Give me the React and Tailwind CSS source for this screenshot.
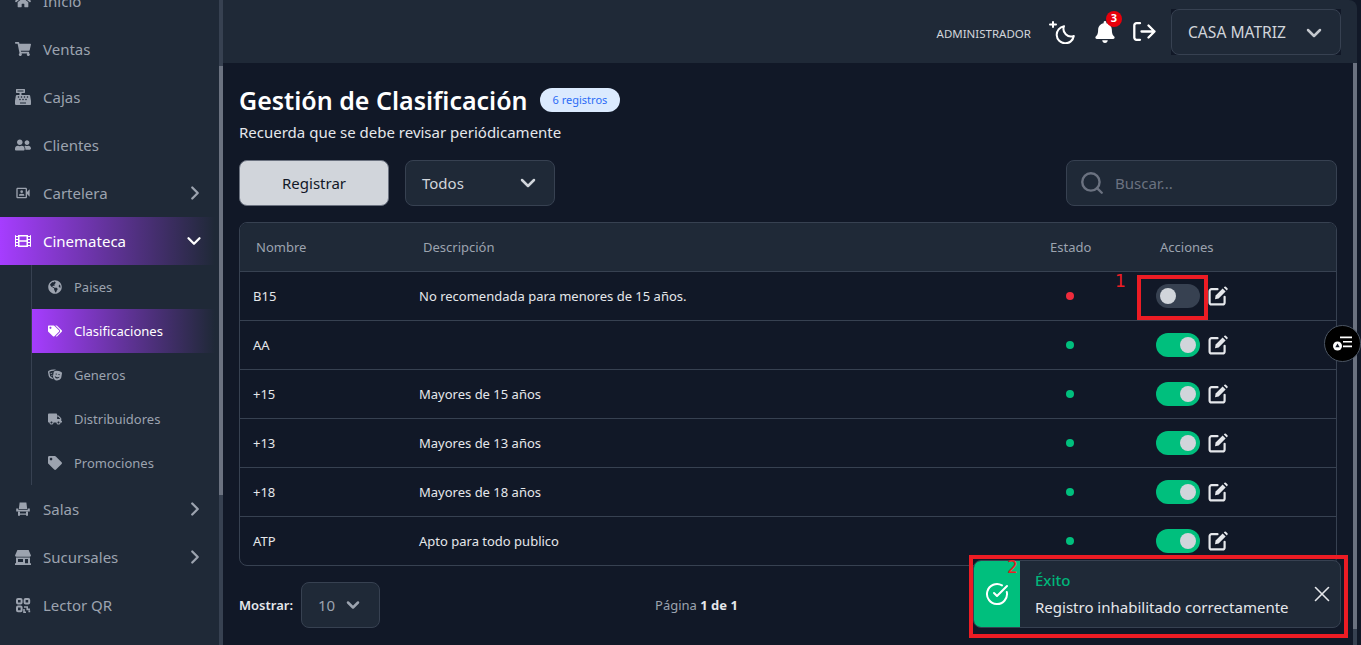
import React from "react";
import {
  FaHome,
  FaShoppingCart,
  FaCashRegister,
  FaUserFriends,
  FaFilm,
  FaGlobeAmericas,
  FaTags,
  FaTheaterMasks,
  FaTruck,
  FaTag,
  FaBell,
} from "react-icons/fa";
import { MdOutlineVideoCameraFront } from "react-icons/md";
import { ChevronDown, ChevronRight, Search, CircleCheckBig, X } from "lucide-react";

function ChairIcon({ className }) {
  return (
    <svg className={className} viewBox="0 0 16 16" fill="currentColor">
      <path d="M4.6 1.5h6.8l.8 6.5H3.8z" />
      <path d="M1.2 7.6h2v1.2h9.6V7.6h2v2.8H1.2z" />
      <path d="M3 10.4h2v2h6v-2h2v4.4h-2v-1H5v1H3z" />
    </svg>
  );
}

function StoreIcon({ className }) {
  return (
    <svg className={className} viewBox="0 0 16 16" fill="currentColor" fillRule="evenodd">
      <path d="M2.4 1h11.2L16 6.6a1.6 1.6 0 0 1-1.6 1.2H1.6A1.6 1.6 0 0 1 0 6.6z" />
      <path d="M1 8.6h14v5.6h1V16H0v-1.8h1zM3 10v3h5v-3zM10 10v4.2h3V10z" />
    </svg>
  );
}

function QrIcon({ className }) {
  return (
    <svg className={className} viewBox="0 0 16 16" fill="none" stroke="currentColor" strokeWidth="2">
      <rect x="2" y="2" width="4.6" height="4.6" rx="1" />
      <rect x="9.6" y="2" width="4.6" height="4.6" rx="1" />
      <rect x="2" y="9.6" width="4.6" height="4.6" rx="1" />
      <path d="M9 10h3.2v2.4H15M9 12v3.2h2M13.4 14.4h1.8" strokeWidth="1.6" />
    </svg>
  );
}

function EditIcon() {
  return (
    <svg className="ml-2 text-[#e5e7eb]" width="20" height="20" viewBox="0 0 20 20" fill="none">
      <path d="M9.5 3.2H3.6a2 2 0 0 0-2 2v11.2a2 2 0 0 0 2 2h11a2 2 0 0 0 2-2v-5.6" stroke="currentColor" strokeWidth="2.2" strokeLinecap="round" />
      <path d="M7.6 9.6 14.6 2.6l3 3-7 7-3.6.7z" fill="currentColor" />
      <path d="M15.8 1.4l.7-.6a1 1 0 0 1 1.4 0l1.5 1.5a1 1 0 0 1 0 1.4l-.6.7z" fill="currentColor" />
    </svg>
  );
}

const menuTop = [
  { name: "Inicio", icon: FaHome },
  { name: "Ventas", icon: FaShoppingCart },
  { name: "Cajas", icon: FaCashRegister },
  { name: "Clientes", icon: FaUserFriends },
  { name: "Cartelera", icon: MdOutlineVideoCameraFront, arrow: true },
];
const subMenu = [
  { name: "Paises", icon: FaGlobeAmericas },
  { name: "Clasificaciones", icon: FaTags, active: true },
  { name: "Generos", icon: FaTheaterMasks },
  { name: "Distribuidores", icon: FaTruck },
  { name: "Promociones", icon: FaTag },
];
const menuBottom = [
  { name: "Salas", icon: ChairIcon, arrow: true },
  { name: "Sucursales", icon: StoreIcon, arrow: true },
  { name: "Lector QR", icon: QrIcon },
];
const rows = [
  { name: "B15", desc: "No recomendada para menores de 15 años.", on: false },
  { name: "AA", desc: "", on: true },
  { name: "+15", desc: "Mayores de 15 años", on: true },
  { name: "+13", desc: "Mayores de 13 años", on: true },
  { name: "+18", desc: "Mayores de 18 años", on: true },
  { name: "ATP", desc: "Apto para todo publico", on: true },
];

function MenuItem({ item }) {
  const Icon = item.icon;
  return (
    <div className="h-12 flex items-center pl-[15px] pr-[13px] text-[#9ca3af]">
      <Icon className="w-4 h-4 shrink-0" />
      <span className="ml-3 text-[15px] flex-1">{item.name}</span>
      {item.arrow && <ChevronRight className="w-[22px] h-[22px]" strokeWidth={2.5} />}
    </div>
  );
}

function Sidebar() {
  return (
    <aside className="w-[223px] shrink-0 h-full flex bg-[#1f2937] overflow-hidden">
      <nav className="w-[219px] h-full overflow-hidden">
        <div className="-mt-[23px]">
          {menuTop.map((item) => (
            <MenuItem key={item.name} item={item} />
          ))}
          <div className="h-12 w-[215px] flex items-center pl-[15px] pr-[10px] text-white bg-gradient-to-r from-[#a63dff] to-transparent">
            <FaFilm className="w-4 h-4 shrink-0" />
            <span className="ml-3 text-[15px] flex-1">Cinemateca</span>
            <ChevronDown className="w-[22px] h-[22px]" strokeWidth={2.5} />
          </div>
          <div className="ml-[31px] w-[184px] border-l border-[#374151]">
            {subMenu.map((item) => {
              const Icon = item.icon;
              return (
                <div
                  key={item.name}
                  className={
                    item.active
                      ? "h-11 flex items-center pl-4 text-white bg-gradient-to-r from-[#a63dff] to-transparent"
                      : "h-11 flex items-center pl-4 text-[#9ca3af]"
                  }
                >
                  <Icon className="w-[14px] h-[14px] shrink-0" />
                  <span className="ml-3 mt-[2px] text-[13px]">{item.name}</span>
                </div>
              );
            })}
          </div>
          {menuBottom.map((item) => (
            <MenuItem key={item.name} item={item} />
          ))}
        </div>
      </nav>
      <div className="w-1 h-full bg-[#374151] pt-[66px]">
        <div className="h-[429px] bg-[#6b7280]"></div>
      </div>
    </aside>
  );
}

function MoonIcon() {
  return (
    <svg width="26" height="23" viewBox="0 0 26 23" fill="none" stroke="currentColor" strokeWidth="2" strokeLinecap="round" strokeLinejoin="round">
      <path d="M15 5.2a8.6 8.6 0 1 0 9.8 9.8A7.6 7.6 0 0 1 15 5.2Z" />
      <path d="M4 1v5M1 3.5h6" />
    </svg>
  );
}

function LogoutIcon() {
  return (
    <svg width="23" height="19" viewBox="0 0 23 19" fill="none" stroke="currentColor" strokeWidth="2.3" strokeLinecap="round" strokeLinejoin="round">
      <path d="M7 1.2H3.5a2.2 2.2 0 0 0-2.2 2.2v12.2a2.2 2.2 0 0 0 2.2 2.2H7" />
      <path d="M8.5 9.5h13M15.5 3.5l6 6-6 6" />
    </svg>
  );
}

function Header() {
  return (
    <header className="h-[63px] shrink-0 bg-[#1f2937] rounded-tr-lg flex items-center justify-end pr-[16px]">
      <span className="text-[11.5px] text-[#d1d5db] mt-[5px]">ADMINISTRADOR</span>
      <span className="ml-[18px] text-white mt-[1px]">
        <MoonIcon />
      </span>
      <div className="relative ml-[20px] text-white">
        <FaBell className="w-5 h-[22px]" />
        <span className="absolute -top-[10px] left-[11px] w-4 h-4 rounded-full bg-[#e7000b] text-white text-[11px] font-bold flex items-center justify-center">
          3
        </span>
      </div>
      <span className="ml-[18px] text-white">
        <LogoutIcon />
      </span>
      <div className="ml-[15px] bg-[#111827]">
        <div className="w-[170px] h-[46px] rounded-lg border border-[#374151] bg-[#1f2937] flex items-center justify-between pl-4 pr-[14px] text-[#d1d5db]">
          <span className="text-[15.6px] mt-[3px]">CASA MATRIZ</span>
          <ChevronDown className="w-6 h-6 mt-[2px] text-[#c4c8ce]" strokeWidth={2.5} />
        </div>
      </div>
    </header>
  );
}

function Toggle({ on }) {
  return (
    <div
      className={
        on
          ? "w-11 h-6 rounded-full bg-[#00bf7d] flex items-center justify-end px-1"
          : "w-11 h-6 rounded-full bg-[#374151] flex items-center justify-start px-1"
      }
    >
      <div className="w-4 h-4 rounded-full bg-[#d1d5db]"></div>
    </div>
  );
}

function Table() {
  return (
    <div className="mt-4 h-[344px] rounded-lg border border-[#374151] overflow-hidden">
      <div className="h-[49px] bg-[#1f2937] flex items-center text-[13px] text-[#9ca3af] border-b border-[#374151]">
        <span className="w-[183px] pl-4 mt-[2px]">Nombre</span>
        <span className="w-[627px] mt-[2px]">Descripción</span>
        <span className="w-[110px] mt-[2px]">Estado</span>
        <span className="mt-[2px]">Acciones</span>
      </div>
      {rows.map((row, i) => (
        <div
          key={row.name}
          className={
            i < rows.length - 1
              ? "h-[49px] flex items-center text-[13px] text-[#e5e7eb] border-b border-[#374151]"
              : "h-[48px] flex items-center text-[13px] text-[#e5e7eb]"
          }
        >
          <span className="w-[179px] pl-[13px] mt-[2px]">{row.name}</span>
          <span className="w-[647px] mt-[2px]">{row.desc}</span>
          <span className="w-[90px]">
            <span className={row.on ? "block w-2 h-2 rounded-full bg-[#00bf7d]" : "block w-2 h-2 rounded-full bg-[#ef2b3c]"}></span>
          </span>
          <Toggle on={row.on} />
          <EditIcon />
        </div>
      ))}
    </div>
  );
}

function Main() {
  return (
    <div className="w-[1134px] shrink-0 flex flex-col h-full">
      <Header />
      <div className="flex-1 flex min-h-0">
        <main className="w-[1130px] px-4 pt-[19px]">
          <div className="flex items-center">
            <h1 className="text-[25px] font-semibold text-white leading-[36px]">Gestión de Clasificación</h1>
            <span className="ml-3 h-6 px-[13px] rounded-full bg-[#dbeafe] text-[#2b6cf6] text-[11px] flex items-center">6 registros</span>
          </div>
          <p className="text-[15px] text-[#e5e7eb] mt-[3px] leading-[22px]">Recuerda que se debe revisar periódicamente</p>
          <div className="mt-[17px] flex items-center">
            <button className="w-[150px] h-[46px] rounded-lg bg-[#d1d5db] border border-[#6b7280] text-[#111827] text-[15px]">Registrar</button>
            <div className="ml-4 w-[150px] h-[46px] rounded-lg border border-[#374151] bg-[#1f2937] flex items-center justify-between pl-4 pr-[14px] text-[#d1d5db]">
              <span className="text-[15px]">Todos</span>
              <ChevronDown className="w-6 h-6" strokeWidth={2.5} />
            </div>
            <div className="ml-auto w-[271px] h-[46px] rounded-lg border border-[#374151] bg-[#1f2937] flex items-center pl-3 text-[#6b7280]">
              <Search className="w-[26px] h-[26px]" strokeWidth={2.2} />
              <span className="ml-[10px] text-[15px]">Buscar...</span>
            </div>
          </div>
          <Table />
          <div className="mt-4 flex items-center">
            <span className="mt-[2px] text-[13px] font-semibold text-[#e5e7eb]">Mostrar:</span>
            <div className="ml-2 w-[79px] h-[46px] rounded-lg border border-[#374151] bg-[#1f2937] flex items-center pl-4 text-[#9ca3af]">
              <span className="text-[15px]">10</span>
              <ChevronDown className="ml-2 w-5 h-5" strokeWidth={3} />
            </div>
            <span className="ml-[275px] mt-[2px] text-[13px] text-[#9ca3af]">
              Página <b className="text-[#e5e7eb]">1 de 1</b>
            </span>
          </div>
        </main>
        <div className="w-1 h-full bg-[#374151]">
          <div className="h-[566px] bg-[#6b7280]"></div>
        </div>
      </div>
    </div>
  );
}

function Toast() {
  return (
    <div className="absolute left-[973px] top-[560px] w-[368px] h-[68px] rounded-lg bg-[#1f2937] border border-[#374151] flex overflow-hidden">
      <div className="w-[46px] bg-[#00bf7d] flex items-center justify-center text-white">
        <CircleCheckBig className="w-6 h-6" strokeWidth={2} />
      </div>
      <div className="flex-1 pl-[15px] pt-2">
        <p className="text-[15px] font-medium text-[#00b67a] leading-[22px]">Éxito</p>
        <p className="text-[15px] text-[#e5e7eb] leading-[22px] mt-[5px]">Registro inhabilitado correctamente</p>
      </div>
      <X className="self-center mr-[5px] w-[26px] h-[26px] text-[#e5e7eb]" strokeWidth={1.5} />
    </div>
  );
}

export default function App() {
  return (
    <div className="relative w-[1361px] h-[645px] overflow-hidden flex bg-[#111827] font-['Noto_Sans',sans-serif]">
      <Sidebar />
      <Main />
      {/* marcas rojas de la captura */}
      <div className="absolute left-[1137px] top-[275px] w-[71px] h-[45px] border-[4px] border-[#ed1c24]"></div>
      <span className="absolute left-[1115px] top-[271px] text-[17px] leading-[20px] text-[#ed1c24] font-['DejaVu_Sans',sans-serif]">1</span>
      <Toast />
      <div className="absolute left-[969px] top-[555px] w-[379px] h-[83px] border-[4px] border-[#ed1c24]"></div>
      <span className="absolute left-[1007px] top-[557px] text-[17px] leading-[20px] text-[#ed1c24] font-['DejaVu_Sans',sans-serif]">2</span>
      {/* boton flotante */}
      <div className="absolute left-[1324px] top-[325px] w-[37px] h-[37px] rounded-full bg-black border border-[#4b5563] flex items-center justify-center text-white">
        <svg width="19" height="15" viewBox="0 0 19 15" fill="currentColor">
          <circle cx="4.5" cy="10" r="4.5" />
          <path d="M4.5 7.6l2.2 3.6H2.3z" fill="#111827" />
          <path d="M7 0.6h12v1.6H7zM10 5h9v1.6h-9zM10 9.6h9v1.6h-9z" />
        </svg>
      </div>
    </div>
  );
}
